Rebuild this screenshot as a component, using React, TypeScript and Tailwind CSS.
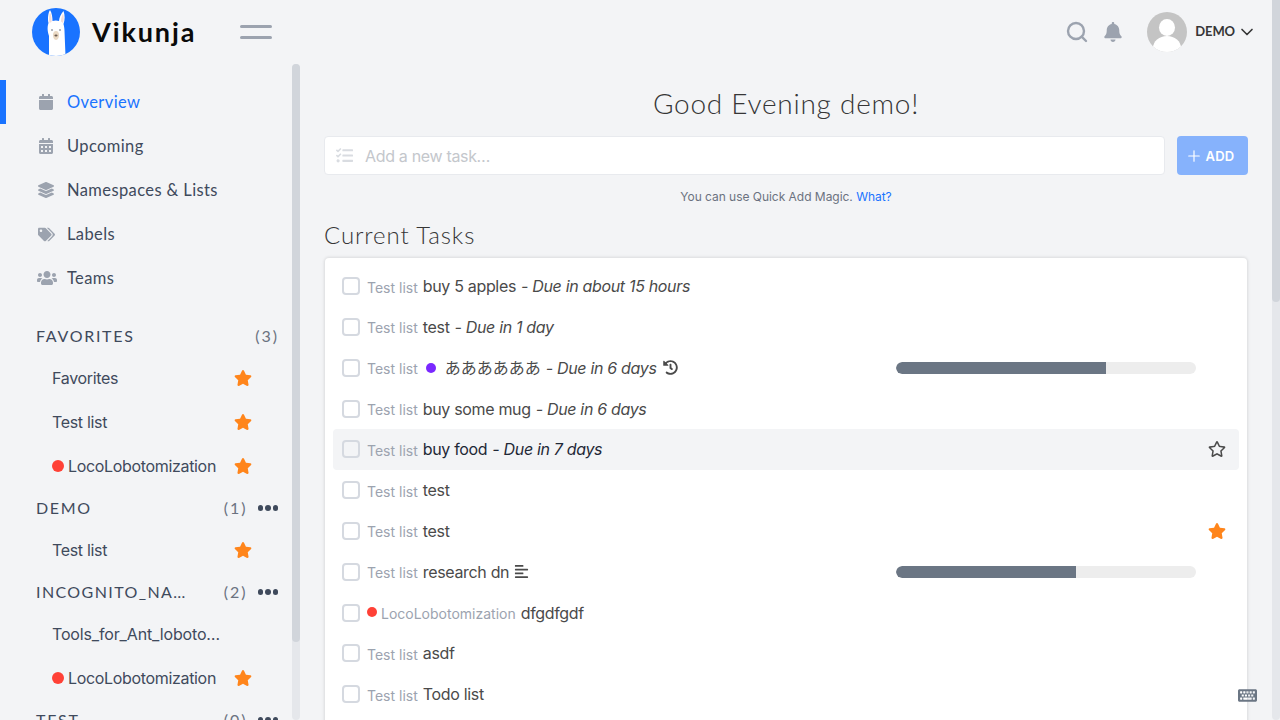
import React from "react";
import { FaCalendar, FaCalendarAlt, FaLayerGroup, FaTags, FaUsers, FaStar, FaRegStar, FaHistory, FaAlignLeft, FaKeyboard, FaBell, FaTasks } from "react-icons/fa";
import { Plus, ChevronDown, Search } from "lucide-react";

const display = "font-['Lato','Noto_Sans',sans-serif]";
const body = "font-['Inter','Noto_Sans_CJK_JP',sans-serif]";

function Logo() {
  return (
    <svg width="48" height="48" viewBox="0 0 48 48" className="shrink-0">
      <defs>
        <clipPath id="c"><circle cx="24" cy="24" r="24" /></clipPath>
      </defs>
      <g clipPath="url(#c)">
        <rect width="48" height="48" fill="#1973ff" />
        <path d="M17 48 L17 28 C15 22 15.500 18 16.500 15 C15.500 11 16 5 18 2 C20 5 20.500 10 20.500 13 C22.500 12.300 25 12.300 27 13 C27.300 9 29 6 31.500 3 C33 7 33 12 31.500 16 C32 18 32.500 20 32.500 23 L33.500 48 Z" fill="#ffffff" />
        <path d="M18 4.500 C19.500 7 19.800 11 19.500 14 L17.500 15 C16.800 11 17 7 18 4.500Z" fill="#f3dcd8" />
        <path d="M31 5.500 C32 8 32 12 31 15 L29 13.500 C29 10.500 29.800 8 31 5.500Z" fill="#f3dcd8" />
        <path d="M21 28 C20.500 25 22 23 24 23 C26 23 27.500 25 27 28 C26.500 31 25 32 24 32 C23 32 21.500 31 21 28Z" fill="#ead9c4" />
        <ellipse cx="24" cy="27.500" rx="1.600" ry="1.100" fill="#6b5b4f" />
        <path d="M19 22 h2 M27 22 h2" stroke="#6b7280" strokeWidth="1" />
      </g>
    </svg>
  );
}

function Avatar() {
  return (
    <svg width="40" height="40" viewBox="0 0 40 40" className="shrink-0">
      <defs>
        <clipPath id="a"><circle cx="20" cy="20" r="20" /></clipPath>
      </defs>
      <g clipPath="url(#a)">
        <rect width="40" height="40" fill="#c4c4c4" />
        <ellipse cx="20" cy="15.500" rx="8" ry="8.500" fill="#fff" />
        <ellipse cx="20" cy="36" rx="14" ry="12" fill="#fff" />
      </g>
    </svg>
  );
}

function NavItem({ icon, label, active }: { icon: React.ReactNode; label: string; active?: boolean }) {
  return (
    <div className={`h-11 shrink-0 flex items-center border-l-[6px] ${active ? "border-[#1973ff] text-[#1973ff]" : "border-transparent text-[#3f4a5c]"}`}>
      <span className="w-[61px] pl-[32px] flex items-center text-[#9ca3af]">{icon}</span>
      <span className={`${display} text-[16.5px] tracking-[0.39px]`}>{label}</span>
    </div>
  );
}

function Section({ name, count, more, tight }: { name: string; count: string; more?: boolean; tight?: boolean }) {
  return (
    <div className="h-10 shrink-0 flex items-center pl-9 pr-[13px] text-[#3f4a5c]">
      <span className={`${display} text-[16px] ${tight ? "tracking-[1.4px]" : "tracking-[1.7px]"} flex-1`}>{name}</span>
      <span className={`${display} text-[16px] tracking-[2px] text-[#6b7280]`}>{count}</span>
      {more && (
        <span className="ml-[10px] mr-px flex gap-[2px]">
          <i className="w-[5.500px] h-[5.500px] rounded-full bg-[#3f4a5c]" />
          <i className="w-[5.500px] h-[5.500px] rounded-full bg-[#3f4a5c]" />
          <i className="w-[5.500px] h-[5.500px] rounded-full bg-[#3f4a5c]" />
        </span>
      )}
    </div>
  );
}

function ListItem({ label, dot, star = true, loose }: { label: string; dot?: boolean; star?: boolean; loose?: boolean }) {
  return (
    <div className="h-11 shrink-0 flex items-center pl-[52px] pr-10 text-[#3f4a5c]">
      {dot && <i className="w-3 h-3 rounded-full bg-[#ff4136] mr-1" />}
      <span className={`${body} text-[16px] flex-1 ${loose ? "tracking-[-0.15px]" : "tracking-[-0.33px]"}`}>{label}</span>
      {star && <FaStar className="text-[#ff851b]" size={18} />}
    </div>
  );
}

type Row = {
  list?: string; title: string; due?: string; redDot?: boolean; purpleDot?: boolean;
  history?: boolean; desc?: boolean; progress?: number; hover?: boolean; star?: boolean;
};

const rows: Row[] = [
  { title: "buy 5 apples", due: "Due in about 15 hours" },
  { title: "test", due: "Due in 1 day" },
  { title: "ああああああ", due: "Due in 6 days", purpleDot: true, history: true, progress: 70 },
  { title: "buy some mug", due: "Due in 6 days" },
  { title: "buy food", due: "Due in 7 days", hover: true },
  { title: "test" },
  { title: "test", star: true },
  { title: "research dn", desc: true, progress: 60 },
  { title: "dfgdfgdf", list: "LocoLobotomization", redDot: true },
  { title: "asdf" },
  { title: "Todo list" },
  { title: "Task" },
];

function TaskRow({ r }: { r: Row }) {
  return (
    <div className={`h-[40.8px] flex items-center pl-[9px] pr-[13px] rounded ${r.hover ? "bg-[#f3f4f6] text-[#1f2937]" : "text-[#4a4a4a]"}`}>
      <span className="w-[18px] h-[18px] rounded border-2 border-[#d5d9e0] mr-[7px] shrink-0" />
      {r.redDot && <i className="w-[10px] h-[10px] rounded-full bg-[#ff4136] mr-1 -translate-y-px" />}
      <span className="text-[14px] text-[#9ca3af] mr-[5px] translate-y-px">{r.list ?? "Test list"}</span>
      {r.purpleDot && <i className="w-[10px] h-[10px] rounded-full bg-[#7a28ff] ml-[3px] mr-[9px]" />}
      <span className={`text-[16px] ${r.purpleDot ? "" : "tracking-[-0.33px]"}`}>{r.title}</span>
      {r.due && <span className="text-[16px] italic ml-[5px] tracking-[-0.33px]">- {r.due}</span>}
      {r.history && <FaHistory className="ml-[6px]" size={15} />}
      {r.desc && <FaAlignLeft className="ml-[5px]" size={15} />}
      <span className="flex-1" />
      {r.progress !== undefined && (
        <span className="w-[300px] h-3 rounded-full bg-[#ededed] overflow-hidden mr-[30px]">
          <span className="block h-full bg-[#6b7684] rounded-l-full" style={{ width: `${r.progress}%` }} />
        </span>
      )}
      {r.hover && <FaRegStar size={18} className="text-[#4a4a4a]" />}
      {r.star && <FaStar size={18} className="text-[#ff851b]" />}
    </div>
  );
}

export default function App() {
  return (
    <div className={`${body} h-screen w-full flex overflow-hidden bg-[#f3f4f6]`}>
      <div className="flex-1 min-w-0 flex flex-col">
        <header className="h-16 shrink-0 flex items-center pl-8 pr-[15px]">
          <Logo />
          <span className={`${display} text-[27px] font-bold tracking-[1.9px] text-[#0a0a0a] ml-3`}>Vikunja</span>
          <span className="ml-11 flex flex-col gap-2">
            <i className="block w-8 h-[3px] rounded-full bg-[#9ca3af]" />
            <i className="block w-8 h-[3px] rounded-full bg-[#9ca3af]" />
          </span>
          <span className="flex-1" />
          <Search size={24} strokeWidth={2.4} className="text-[#9ca3af]" />
          <FaBell size={20} className="text-[#9ca3af] ml-[14px]" />
          <span className="ml-[24px]"><Avatar /></span>
          <span className={`${display} text-[13px] font-bold text-[#363636] ml-2 tracking-[-0.1px]`}>DEMO</span>
          <ChevronDown size={20} strokeWidth={2} className="text-[#363636] ml-[2px]" />
        </header>
        <div className="flex-1 min-h-0 flex">
          <aside className="w-[300px] shrink-0 flex overflow-hidden">
            <div className="w-[292px] pt-4 shrink-0 flex flex-col">
              <NavItem active icon={<FaCalendar size={16} />} label="Overview" />
              <NavItem icon={<FaCalendarAlt size={16} />} label="Upcoming" />
              <NavItem icon={<FaLayerGroup size={16} />} label="Namespaces & Lists" />
              <NavItem icon={<FaTags size={17} />} label="Labels" />
              <NavItem icon={<FaUsers size={20} className="-ml-[1px]" />} label="Teams" />
              <div className="h-4 shrink-0" />
              <Section name="FAVORITES" count="(3)" />
              <ListItem label="Favorites" />
              <ListItem label="Test list" />
              <ListItem label="LocoLobotomization" dot />
              <Section name="DEMO" count="(1)" more />
              <ListItem label="Test list" />
              <Section name="INCOGNITO_NA…" count="(2)" more tight />
              <ListItem label="Tools_for_Ant_loboto…" star={false} loose />
              <ListItem label="LocoLobotomization" dot />
              <Section name="TEST" count="(0)" more />
            </div>
            <div className="w-2 flex flex-col bg-[#e5e7eb] rounded-lg">
              <div className="h-[578px] rounded bg-[#d1d5db]" />
            </div>
          </aside>
          <main className="flex-1 min-w-0 px-6 overflow-hidden">
            <h1 className={`${display} text-[28px] font-light text-[#363636] text-center pt-5 leading-[38px] tracking-[0.75px]`}>Good Evening demo!</h1>
            <div className="mt-[14px] flex gap-3">
              <div className="flex-1 h-[39px] bg-white rounded border border-[#e8eaee] flex items-center pl-[11px]">
                <FaTasks size={17} className="text-[#d9dce1]" />
                <span className={`${body} text-[16px] tracking-[-0.33px] text-[#c4c7cc] ml-[12px]`}>Add a new task…</span>
              </div>
              <div className="w-[71px] h-[39px] pr-[6px] rounded bg-[#86b2fc] flex items-center justify-center text-white">
                <Plus size={18} strokeWidth={1.6} />
                <span className="text-[13px] font-semibold ml-[3px] tracking-[0.2px] translate-y-px">ADD</span>
              </div>
            </div>
            <p className="text-[12px] text-[#6b7280] text-center mt-[13px] leading-[18px] tracking-[-0.03px]">
              You can use Quick Add Magic. <span className="text-[#1973ff]">What?</span>
            </p>
            <h3 className={`${display} text-[24px] font-light text-[#363636] mt-[12px] leading-[34px] tracking-[0.9px]`}>Current Tasks</h3>
            <div className="mt-[5.8px] mx-px bg-white rounded p-2 shadow-[0_0_3px_1px_rgba(0,0,0,0.1)]">
              {rows.map((r, i) => <TaskRow key={i} r={r} />)}
            </div>
          </main>
        </div>
      </div>
      <div className="w-2 shrink-0 bg-[#e5e7eb] rounded-lg">
        <div className="h-[302px] rounded-b bg-[#d1d5db]" />
      </div>
      <FaKeyboard size={19} className="absolute left-[1238px] top-[686px] text-[#6b7684]" />
    </div>
  );
}
